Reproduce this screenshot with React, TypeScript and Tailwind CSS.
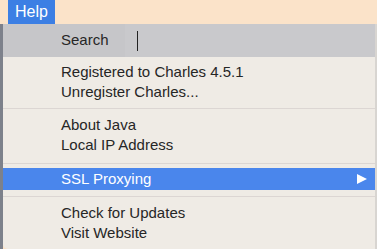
export default function App() {
  return (
    <div className="w-[377px] h-[249px] overflow-hidden bg-[#fbe3c9] flex flex-col font-['Helvetica_Neue','Liberation_Sans',sans-serif] text-[15px] text-[#262626]">
      {/* Menu bar */}
      <div className="h-[24px] shrink-0 flex">
        <div className="ml-[8px] w-[47px] bg-[#3c7fe4] text-white text-[16px] flex items-center justify-center">
          Help
        </div>
      </div>

      <div className="flex flex-1 min-h-0">
        <div className="w-[3px] bg-[#7d818b]" />
        {/* Dropdown */}
        <div className="w-[372px] bg-[#efebe5] rounded-bl-[5px] flex flex-col">
          <div className="h-[33px] shrink-0 bg-[#c6c6c9] flex items-center">
            <span className="ml-[58px] w-[64px]">Search</span>
            <div className="flex-1 h-full flex items-center bg-[#c9c9cc]">
              <div className="ml-[12px] w-px h-[20px] bg-[#222]" />
            </div>
          </div>

          <div className="h-[5px]" />
          <Item label="Registered to Charles 4.5.1" />
          <Item label="Unregister Charles..." />
          <div className="h-px shrink-0 bg-[#dcd6d3] my-[6px]" />
          <Item label="About Java" />
          <Item label="Local IP Address" />
          <div className="h-px shrink-0 bg-[#dcd6d3] mt-[8px] mb-[4px]" />
          <div className="h-[22px] bg-[#4a86ec] text-white flex items-center justify-between">
            <span className="ml-[58px]">SSL Proxying</span>
            <svg width="10" height="10" viewBox="0 0 10 10" className="mr-[8px]">
              <path d="M0 0 L10 5 L0 10 Z" fill="#fff" />
            </svg>
          </div>
          <div className="h-px shrink-0 bg-[#dcd6d3] my-[6px]" />
          <Item label="Check for Updates" />
          <Item label="Visit Website" />
        </div>
        <div className="w-[2px] bg-[#d8d5d1]" />
      </div>
    </div>
  );
}

function Item({ label }: { label: string }) {
  return (
    <div className="h-[20px] shrink-0 flex items-center">
      <span className="ml-[58px]">{label}</span>
    </div>
  );
}
